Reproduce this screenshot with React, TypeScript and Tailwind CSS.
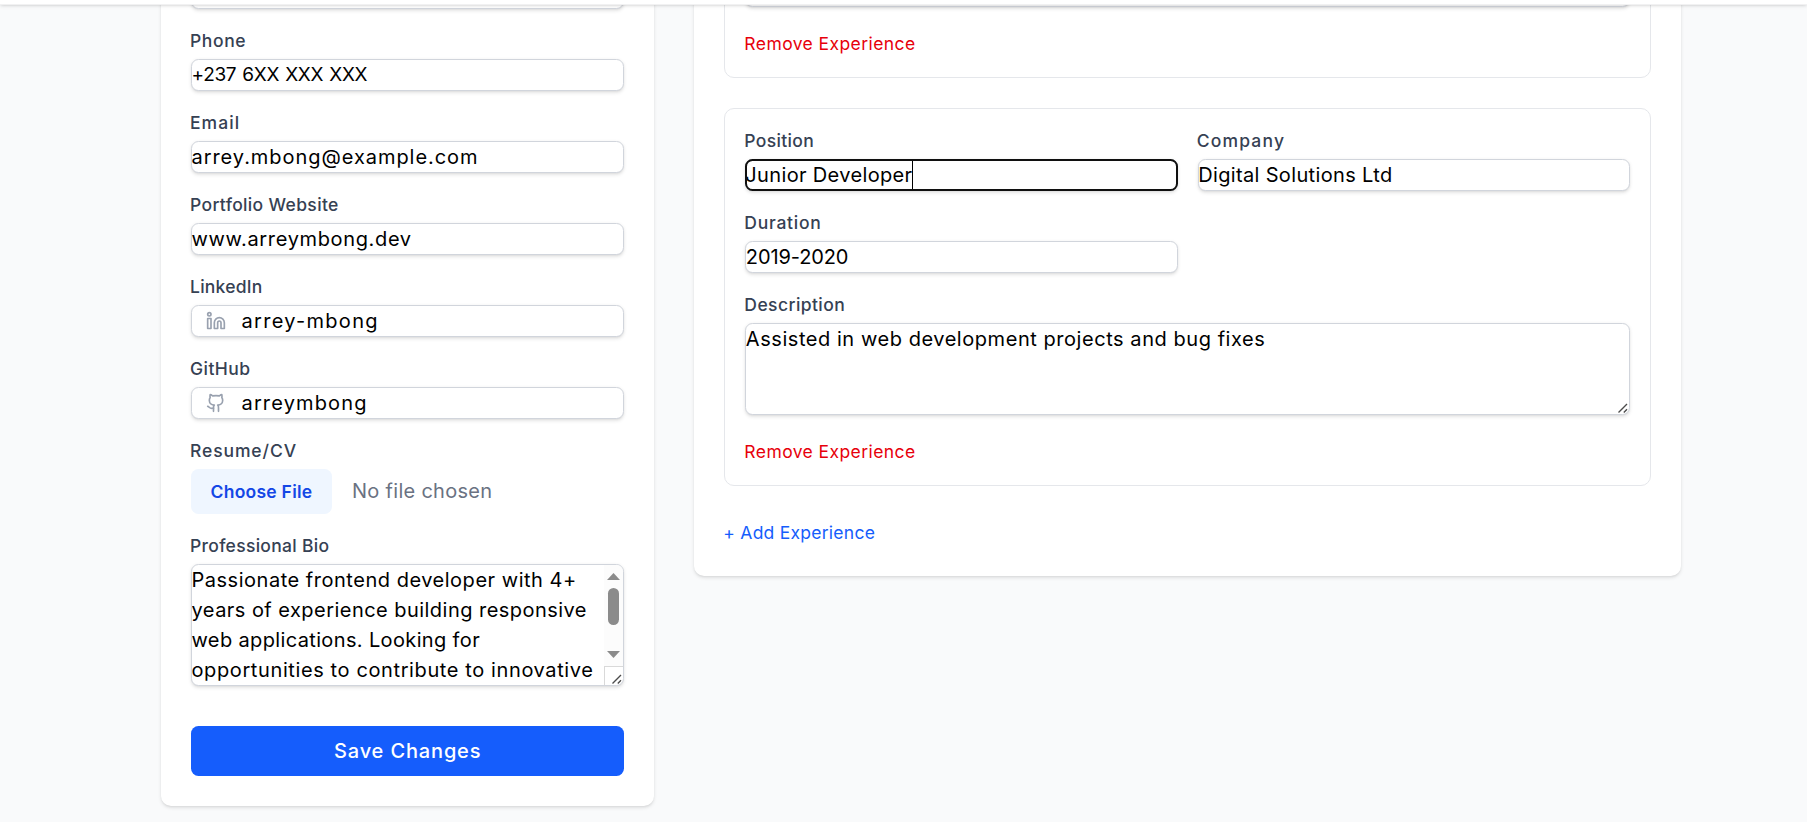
import React from "react";
import type { ReactNode } from "react";

const FIELD =
  "flex w-full items-center rounded-[7.5px] border border-gray-300 bg-white text-[20px] leading-[30px] text-black whitespace-pre shadow-[0_1.25px_3.75px_rgba(0,0,0,0.1),0_1.25px_2.5px_-1.25px_rgba(0,0,0,0.1)]";

const CARD =
  "bg-white rounded-[10px] p-[30px] shadow-[0_1.25px_3.75px_rgba(0,0,0,0.1),0_1.25px_2.5px_-1.25px_rgba(0,0,0,0.1)]";

const LABEL = "-mt-px mb-px -ml-px text-[17.5px] leading-[25px] font-medium text-gray-700";

const REMOVE = "text-[17.5px] leading-[23px] pb-[2px] -ml-px tracking-[0.42px] text-[#e7000b]";

function Field({ label, track, children }: { label: string; track: string; children: ReactNode }) {
  return (
    <div className="flex flex-col gap-[5px]">
      <label className={`${LABEL} ${track}`}>{label}</label>
      {children}
    </div>
  );
}

function TextBox({ value, track, icon }: { value: string; track: string; icon?: ReactNode }) {
  return (
    <div className={`${FIELD} h-8`}>
      {icon && <span className="flex w-[50px] shrink-0 pl-[14px] text-gray-400">{icon}</span>}
      <span className={`-ml-[0.5px] ${track}`}>{value}</span>
    </div>
  );
}

function LinkedinIcon() {
  return (
    <svg className="size-5" viewBox="0 0 24 24" fill="none" stroke="currentColor" strokeWidth="2" strokeLinecap="round" strokeLinejoin="round">
      <path d="M16 8a6 6 0 0 1 6 6v7h-4v-7a2 2 0 0 0-4 0v7h-4v-7a6 6 0 0 1 6-6z" />
      <rect x="2" y="9" width="4" height="12" />
      <circle cx="4" cy="4" r="2" />
    </svg>
  );
}

function GithubIcon() {
  return (
    <svg className="size-5" viewBox="0 0 24 24" fill="none" stroke="currentColor" strokeWidth="2" strokeLinecap="round" strokeLinejoin="round">
      <path d="M15 22v-4a4.8 4.8 0 0 0-1-3.5c3 0 6-2 6-5.5.08-1.25-.27-2.48-1-3.5.28-1.15.28-2.35 0-3.5 0 0-1 0-3 1.5-2.64-.5-5.36-.5-8 0C6 2 5 2 5 2c-.3 1.15-.3 2.35 0 3.5A5.403 5.403 0 0 0 4 9c0 3.5 3 5.5 6 5.5-.39.49-.68 1.05-.85 1.65-.17.6-.22 1.23-.15 1.85v4" />
      <path d="M9 18c-4.51 2-5-2-7-2" />
    </svg>
  );
}

function ResizeGrip() {
  return (
    <svg className="block h-[10px] w-[10px]" viewBox="0 0 10 10" fill="none" stroke="#4b4b4b" strokeWidth="1.4">
      <path d="M0.5 9.5L9 1M5.8 9.5L9 6.3" />
    </svg>
  );
}

function BioScrollbar() {
  return (
    <div className="flex w-[19px] shrink-0 flex-col">
      <div className="flex flex-1 flex-col items-center bg-[#fcfcfc] pt-[8px] pb-[8px]">
        <svg className="h-[7px] w-[13px]" viewBox="0 0 13 7" fill="#8b8b8b">
          <path d="M6.5 0L13 7H0z" />
        </svg>
        <div className="mt-2 h-[37px] w-[11px] rounded-full bg-[#8b8b8b]" />
        <svg className="mt-auto h-[7px] w-[13px]" viewBox="0 0 13 7" fill="#8b8b8b">
          <path d="M0 0H13L6.5 7z" />
        </svg>
      </div>
      <div className="flex h-[19px] items-end justify-end border-t border-l border-[#d9d9d9] pr-px pb-px">
        <ResizeGrip />
      </div>
    </div>
  );
}

export default function App() {
  return (
    <div className="flex h-[822px] w-full flex-col overflow-hidden bg-gray-50 font-['Inter',sans-serif]">
      <header className="z-10 h-[5px] w-full shrink-0 border-b border-[#f1f1f2] bg-white shadow-[0_1.25px_3.75px_rgba(0,0,0,0.1),0_1.25px_2.5px_-1.25px_rgba(0,0,0,0.1)]" />
      <main className="ml-[161px] grid w-[1520px] grid-cols-[493.33px_986.67px] items-start gap-x-10">
        <section className={`${CARD} -mt-[58px] flex flex-col gap-5`}>
          <TextBox value="" track="" />
          <Field label="Phone" track="tracking-[0.6px]">
            <TextBox value="+237 6XX XXX XXX" track="text-[19px] tracking-[-0.3px] [word-spacing:1px]" />
          </Field>
          <Field label="Email" track="tracking-[1.06px]">
            <TextBox value="arrey.mbong@example.com" track="tracking-[0.95px]" />
          </Field>
          <Field label="Portfolio Website" track="tracking-[0.35px]">
            <TextBox value="www.arreymbong.dev" track="tracking-[0.65px]" />
          </Field>
          <Field label="LinkedIn" track="tracking-[0.25px]">
            <TextBox value="arrey-mbong" track="tracking-[1.3px]" icon={<LinkedinIcon />} />
          </Field>
          <Field label="GitHub" track="tracking-[0.45px]">
            <TextBox value="arreymbong" track="tracking-[1.15px]" icon={<GithubIcon />} />
          </Field>
          <Field label="Resume/CV" track="tracking-[0.9px]">
            <div className="flex h-[45px] items-center gap-5">
              <button className="h-[45px] w-[141px] rounded-[7.5px] bg-blue-50 text-[17.5px] leading-[25px] font-semibold tracking-[0.25px] text-blue-700">
                Choose File
              </button>
              <span className="pb-[2px] text-[20px] leading-[30px] tracking-[0.29px] text-gray-500">No file chosen</span>
            </div>
          </Field>
          <Field label="Professional Bio" track="tracking-[0.3px]">
            <div className={`${FIELD} h-[122px] overflow-hidden`}>
              <div className="-ml-[0.5px] flex h-[120px] min-w-0 flex-1 flex-col">
                <span className="tracking-[0.52px]">Passionate frontend developer with 4+</span>
                <span className="tracking-[0.46px]">years of experience building responsive</span>
                <span className="tracking-[0.36px]">web applications. Looking for</span>
                <span className="tracking-[0.61px]">opportunities to contribute to innovative</span>
              </div>
              <div className="flex h-[120px]">
                <BioScrollbar />
              </div>
            </div>
          </Field>
          <button className="mt-5 h-[50px] w-full rounded-[7.5px] bg-[#155dfc] text-[20px] leading-[30px] font-medium tracking-[0.85px] text-white">
            Save Changes
          </button>
        </section>

        <section className={`${CARD} -mt-[145px] flex flex-col gap-[30px]`}>
          <div className="flex h-[188px] flex-col items-start justify-end gap-[25px] rounded-[10px] border border-gray-200 p-5">
            <div className={`${FIELD} h-[92px] shrink-0`} />
            <button className={REMOVE}>Remove Experience</button>
          </div>

          <div className="flex flex-col items-start gap-5 rounded-[10px] border border-gray-200 p-5">
            <div className="grid w-full grid-cols-2 gap-5">
              <Field label="Position" track="tracking-[0.35px]">
                <div className={`${FIELD} h-8 outline-2 -outline-offset-2 outline-[#101010]`}>
                  <span className="-ml-px tracking-[0.35px]">Junior Developer</span>
                  <span className="h-[30px] w-px bg-black" />
                </div>
              </Field>
              <Field label="Company" track="tracking-[1.19px]">
                <TextBox value="Digital Solutions Ltd" track="tracking-[0.35px]" />
              </Field>
              <Field label="Duration" track="tracking-[0.75px]">
                <TextBox value="2019-2020" track="tracking-[-0.11px]" />
              </Field>
            </div>
            <div className="flex w-full flex-col gap-[5px]">
              <label className={`${LABEL} tracking-[0.43px]`}>Description</label>
              <div className={`${FIELD} h-[92px] justify-between`}>
                <span className="-ml-[0.5px] self-start tracking-[0.55px]">Assisted in web development projects and bug fixes</span>
                <span className="self-end pr-px pb-px">
                  <ResizeGrip />
                </span>
              </div>
            </div>
            <button className={`${REMOVE} mt-[5px]`}>Remove Experience</button>
          </div>

          <button className="mt-[5px] -ml-px self-start pb-[2px] text-[17.5px] leading-[23px] tracking-[0.25px] text-[#155dfc]">
            + Add Experience
          </button>
        </section>
      </main>
    </div>
  );
}
